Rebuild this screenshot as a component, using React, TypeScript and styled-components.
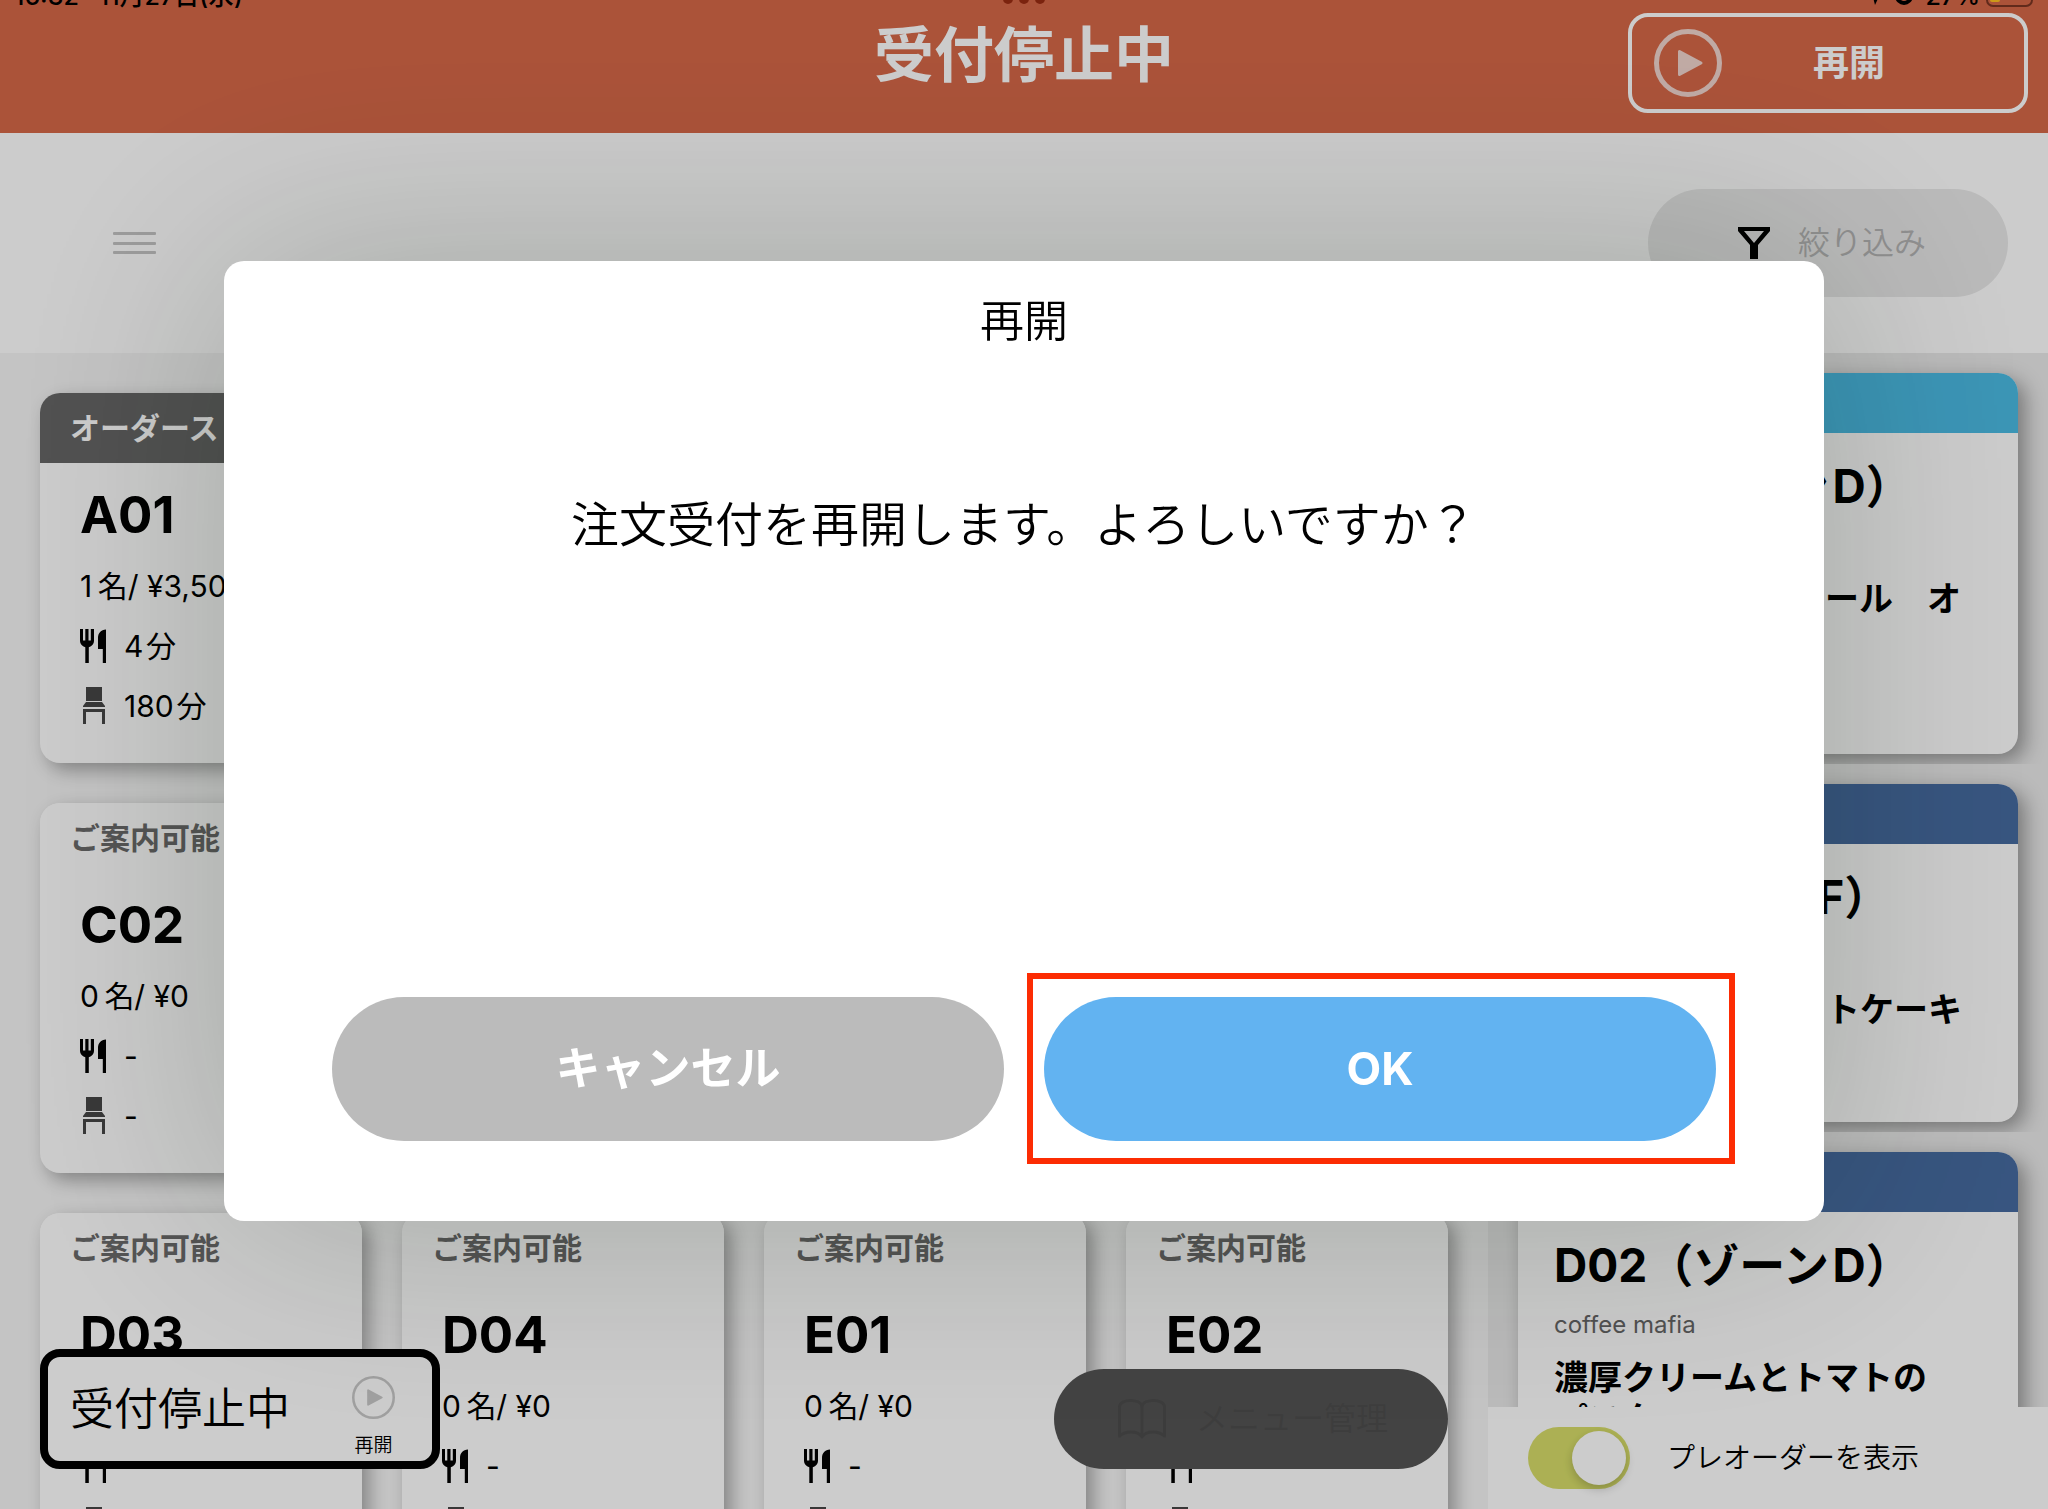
import React from "react";
import styled, { createGlobalStyle } from "styled-components";

const GlobalStyle = createGlobalStyle`
  *, *::before, *::after { box-sizing: border-box; }
  body {
    margin: 0;
    background: #f5f5f5;
    color: #000;
    font-family: Inter, "Noto Sans CJK JP", sans-serif;
  }
  button {
    margin: 0;
    padding: 0;
    border: 0;
    background: none;
    color: inherit;
    font: inherit;
    cursor: pointer;
  }
  h1, h2, h3, p { margin: 0; }
`;

const Screen = styled.div`
  position: relative;
  display: flex;
  flex-direction: column;
  height: 100vh;
  overflow: hidden;
`;

/* ---------- header ---------- */

const Header = styled.header`
  position: relative;
  display: grid;
  grid-template-columns: 400px 1fr 400px;
  align-items: start;
  flex: none;
  height: 133px;
  padding: 13px 20px 20px;
  background: #d66848;
  color: #fff;
`;

const StatusBar = styled.div`
  position: absolute;
  inset: 0 0 auto 0;
  display: flex;
  justify-content: space-between;
  align-items: flex-end;
  height: 8px;
  padding: 0 15px 0 14px;
  overflow: hidden;
  color: #000;
  font-size: 25px;
  line-height: 24px;
  font-weight: 500;
`;

const StatusGroup = styled.div<{ $align: string; $gap: number }>`
  display: flex;
  flex: 1;
  align-items: flex-end;
  justify-content: ${(p) => p.$align};
  gap: ${(p) => p.$gap}px;
  height: 24px;
`;

const Dots = styled.svg`
  display: block;
  margin-bottom: 4px;
`;

const HeaderTitle = styled.h1`
  grid-column: 2;
  text-align: center;
  font-size: 60px;
  line-height: 84px;
  font-weight: 700;
`;

const HeaderButton = styled.button`
  display: flex;
  align-items: center;
  height: 100px;
  padding: 0 22px;
  border: 4px solid #fff;
  border-radius: 20px;
  font-size: 36px;
  line-height: 48px;
  font-weight: 700;
`;

const HeaderButtonLabel = styled.span`
  flex: 1;
  padding-right: 26px;
  text-align: center;
`;

/* ---------- toolbar ---------- */

const Toolbar = styled.div`
  display: flex;
  align-items: center;
  justify-content: space-between;
  flex: none;
  height: 220px;
  padding: 0 40px 0 113px;
  background: #fff;
`;

const MenuButton = styled.button`
  display: flex;
  flex-direction: column;
  justify-content: space-between;
  width: 43px;
  height: 22px;
`;

const MenuLine = styled.span`
  height: 3px;
  border-radius: 1px;
  background: #c4c4c4;
`;

const FilterButton = styled.button`
  display: flex;
  align-items: center;
  justify-content: center;
  gap: 28px;
  width: 360px;
  height: 108px;
  padding-left: 8px;
  border-radius: 54px;
  background: #e9e9e9;
  color: #b4b4b4;
  font-size: 32px;
  line-height: 40px;
  font-weight: 350;
`;

/* ---------- main area ---------- */

const Main = styled.main`
  display: flex;
  flex: 1;
  min-height: 0;
`;

const Tables = styled.section`
  display: flex;
  flex-direction: column;
  gap: 40px;
  flex: 1;
  min-width: 0;
  padding: 40px;
  overflow: hidden;
`;

const TableRow = styled.div`
  display: grid;
  grid-template-columns: repeat(4, 1fr);
  gap: 40px;
`;

const TableCardBox = styled.article`
  flex: none;
  overflow: hidden;
  border-radius: 20px;
  background: #fff;
  box-shadow: 7px 7px 18px rgba(0, 0, 0, 0.32);
`;

const CardStatus = styled.div<{ $stopped?: boolean }>`
  height: 70px;
  padding: 0 30px;
  overflow: hidden;
  white-space: nowrap;
  background: ${(p) => (p.$stopped ? "#666" : "#fff")};
  color: ${(p) => (p.$stopped ? "#fff" : "#6a6a6a")};
  font-size: 30px;
  line-height: 70px;
  font-weight: 700;
`;

const CardBody = styled.div`
  padding: 22px 40px 27px;
`;

const TableName = styled.h2`
  margin-bottom: 11px;
  font-size: 51px;
  line-height: 60px;
  font-weight: 700;
`;

const Info = styled.div`
  display: flex;
  align-items: center;
  gap: 18px;
  height: 60px;
  font-size: 30px;
  line-height: 40px;
  font-weight: 400;
  white-space: nowrap;
`;

/* ---------- order column ---------- */

const Orders = styled.aside`
  display: flex;
  flex-direction: column;
  flex: none;
  width: 560px;
  background: #eaeaea;
`;

const OrderList = styled.div`
  flex: 1;
  min-height: 0;
  overflow: hidden;
`;

const OrderSlot = styled.div`
  padding: 20px 30px 10px;
  overflow: hidden;
`;

const OrderCard = styled.article<{ $height: number }>`
  min-height: ${(p) => p.$height}px;
  overflow: hidden;
  border-radius: 20px;
  background: #fff;
  box-shadow: 7px 7px 20px rgba(0, 0, 0, 0.36);
`;

const OrderStripe = styled.div<{ $color: string }>`
  height: 60px;
  background: ${(p) => p.$color};
`;

const OrderBody = styled.div`
  padding: 23px 36px 0;
`;

const OrderTitle = styled.h3`
  font-size: 46px;
  line-height: 60px;
  font-weight: 700;
  white-space: nowrap;
`;

const OrderShop = styled.p`
  height: 62px;
  color: #666;
  font-size: 24px;
  line-height: 60px;
`;

const OrderItem = styled.p`
  font-size: 34px;
  line-height: 42px;
  font-weight: 700;
  white-space: pre-line;
`;

const PreorderBar = styled.label`
  display: flex;
  align-items: center;
  gap: 37px;
  flex: none;
  height: 102px;
  padding: 0 40px;
  background: #fff;
  font-size: 28px;
  line-height: 40px;
  font-weight: 350;
`;

const Switch = styled.input`
  appearance: none;
  display: flex;
  align-items: center;
  justify-content: flex-start;
  width: 102px;
  height: 62px;
  margin: 0;
  padding: 4px;
  border-radius: 31px;
  background: #ddd;

  &::before {
    content: "";
    width: 54px;
    height: 54px;
    border-radius: 50%;
    background: #fff;
    box-shadow: 0 4px 10px rgba(0, 0, 0, 0.2);
  }

  &:checked {
    justify-content: flex-end;
    background: #d7dd69;
  }
`;

/* ---------- floating controls ---------- */

const FloatingBar = styled.div`
  position: absolute;
  left: 40px;
  right: 600px;
  bottom: 40px;
  display: flex;
  align-items: flex-end;
  justify-content: space-between;
`;

const StopPanel = styled.div`
  display: flex;
  align-items: center;
  justify-content: space-between;
  width: 400px;
  height: 120px;
  padding: 0 37px 0 22px;
  border: 8px solid #000;
  border-radius: 20px;
  background: #fff;
  font-size: 44px;
  line-height: 60px;
  font-weight: 350;
`;

const ResumeButton = styled.button`
  display: flex;
  flex-direction: column;
  align-items: center;
  gap: 15px;
  padding-top: 15px;
  font-size: 19px;
  line-height: 24px;
  font-weight: 350;
`;

const MenuManageButton = styled.button`
  display: flex;
  align-items: center;
  justify-content: center;
  gap: 30px;
  width: 394px;
  height: 100px;
  padding-left: 4px;
  border-radius: 50px;
  background: #545454;
  color: #4d4d4d;
  font-size: 32px;
  line-height: 40px;
  font-weight: 350;
`;

/* ---------- dialog ---------- */

const Backdrop = styled.div`
  position: fixed;
  inset: 0;
  display: flex;
  align-items: center;
  justify-content: center;
  padding: 0 40px 27px;
  background: rgba(0, 0, 0, 0.2);
`;

const Dialog = styled.div`
  display: flex;
  flex-direction: column;
  width: 100%;
  max-width: 1600px;
  min-height: 960px;
  padding: 30px 108px 80px;
  border-radius: 20px;
  background: #fff;
  box-shadow: 0 0 230px rgba(0, 22, 0, 0.21);
  text-align: center;
`;

const DialogTitle = styled.h2`
  font-size: 44px;
  line-height: 60px;
  font-weight: 350;
`;

const DialogMessage = styled.p`
  flex: 1;
  padding-top: 144px;
  font-size: 48px;
  line-height: 60px;
  font-weight: 350;
`;

const DialogActions = styled.div`
  display: grid;
  grid-template-columns: 1fr 1fr;
  gap: 40px;
`;

const ActionSlot = styled.div`
  position: relative;
  display: grid;
`;

const ActionButton = styled.button<{ $color: string }>`
  height: 144px;
  border-radius: 72px;
  background: ${(p) => p.$color};
  color: #fff;
  font-size: 45px;
  line-height: 60px;
  font-weight: 700;
`;

const Highlight = styled.span`
  position: absolute;
  inset: -24px -19px -23px -17px;
  border: 6px solid #fc2c03;
  pointer-events: none;
`;

/* ---------- icons ---------- */

const PlayIcon = ({ size, stroke, color }: { size: number; stroke: number; color: string }) => (
  <svg width={size} height={size} viewBox="0 0 68 68" fill="none" aria-hidden="true">
    <circle cx="34" cy="34" r={34 - stroke / 2} stroke={color} strokeWidth={stroke} />
    <path d="M25.500 22.500V45.500L47 34Z" fill={color} stroke={color} strokeWidth="3" strokeLinejoin="round" />
  </svg>
);

const FilterIcon = () => (
  <svg width="32" height="32" viewBox="0 0 32 32" aria-hidden="true">
    <path
      fillRule="evenodd"
      fill="#000"
      d="M0 0H32V4L20 18V32H12V18L0 4ZM6 4L16 16L26 4Z"
    />
  </svg>
);

const CutleryIcon = () => (
  <svg width="26" height="34" viewBox="0 0 26 34" aria-hidden="true">
    <path d="M0 0H3V11.500H5.300V0H8.500V11.500H10.800V0H14V12C14 15 12 17 8.800 18.200V34H5.300V18.200C2 17 0 15 0 12Z" />
    <path d="M26 0.500V34H22.800V20H18V9C18 4 21 0.800 26 0.500Z" />
  </svg>
);

const ChairIcon = () => (
  <svg width="26" height="38" viewBox="0 0 26 38" fill="#474747" aria-hidden="true">
    <path d="M6 0H22V14H6Z" />
    <path d="M6 15H22L25 19V20H3V19Z" />
    <path d="M3 22H25V37H22V25H6V37H3Z" />
  </svg>
);

const BookIcon = () => (
  <svg width="48" height="40" viewBox="0 0 48 40" fill="none" stroke="#4c4c4c" strokeWidth="3" strokeLinejoin="round" aria-hidden="true">
    <path d="M24 7C23 3.500 18 1.500 12.500 1.500C7 1.500 1.500 3.500 1.500 8V37C5 34 9 33 13 33C18 33 22 34.500 24 38C26 34.500 30 33 35 33C39 33 43 34 46.500 37V8C46.500 3.500 41 1.500 35.500 1.500C30 1.500 25 3.500 24 7Z" />
    <path d="M24 7V38" />
  </svg>
);

/* ---------- data ---------- */

type Table = {
  name: string;
  status: string;
  stopped?: boolean;
  summary: string;
  eating: string;
  seated: string;
};

const vacant = (name: string): Table => ({
  name,
  status: "ご案内可能",
  summary: "0\u2009名/ ¥0",
  eating: "-",
  seated: "-",
});

const rows: Table[][] = [
  [
    {
      name: "A01",
      status: "オーダーストップ",
      stopped: true,
      summary: "1\u2009名/ ¥3,500",
      eating: "4\u200A分",
      seated: "180\u200A分",
    },
  ],
  [vacant("C02")],
  [vacant("D03"), vacant("D04"), vacant("E01"), vacant("E02")],
];

const orders = [
  { title: "D02（ゾーン\u200AD）", color: "#4bbbe4", item: "ノンアルコールビール　オ", height: 381 },
  { title: "F01（ゾーン\u200AF）", color: "#466ba0", item: "ふわふわ厚焼ホットケーキ", height: 338 },
  { title: "D02（ゾーン\u200AD）", color: "#466ba0", item: "濃厚クリームとトマトの\nパスタ", height: 381 },
];

const TableCard = ({ table }: { table: Table }) => (
  <TableCardBox>
    <CardStatus $stopped={table.stopped}>{table.status}</CardStatus>
    <CardBody>
      <TableName>{table.name}</TableName>
      <Info>{table.summary}</Info>
      <Info>
        <CutleryIcon />
        {table.eating}
      </Info>
      <Info>
        <ChairIcon />
        {table.seated}
      </Info>
    </CardBody>
  </TableCardBox>
);

export default function App() {
  return (
    <>
      <GlobalStyle />
      <Screen>
        <Header>
          <StatusBar>
            <StatusGroup $align="flex-start" $gap={20}>
              <span>16:32</span>
              <span>11月27日(水)</span>
            </StatusGroup>
            <Dots width="42" height="9" viewBox="0 0 42 9" fill="#9a2c12" aria-hidden="true">
              <circle cx="5" cy="4" r="5" />
              <circle cx="21" cy="4" r="5" />
              <circle cx="37" cy="4" r="5" />
            </Dots>
            <StatusGroup $align="flex-end" $gap={6}>
              <svg width="24" height="20" viewBox="0 0 24 20" aria-hidden="true">
                <path d="M0 6L18 0L10 17L8 9Z" />
              </svg>
              <svg width="24" height="20" viewBox="0 0 24 20" fill="none" stroke="#000" strokeWidth="4" aria-hidden="true">
                <circle cx="9" cy="8" r="7" />
              </svg>
              <span>27%</span>
              <svg width="47" height="24" viewBox="0 0 47 24" aria-hidden="true">
                <rect x="1" y="1" width="45" height="21" rx="6" fill="none" stroke="#7a3522" strokeWidth="2" />
                <rect x="4" y="4" width="10" height="14" rx="2" fill="#ffc020" />
              </svg>
            </StatusGroup>
          </StatusBar>
          <HeaderTitle>受付停止中</HeaderTitle>
          <HeaderButton type="button">
            <PlayIcon size={68} stroke={5} color="#f0d5ce" />
            <HeaderButtonLabel>再開</HeaderButtonLabel>
          </HeaderButton>
        </Header>

        <Toolbar>
          <MenuButton type="button" aria-label="メニュー">
            <MenuLine />
            <MenuLine />
            <MenuLine />
          </MenuButton>
          <FilterButton type="button">
            <FilterIcon />
            絞り込み
          </FilterButton>
        </Toolbar>

        <Main>
          <Tables>
            {rows.map((row) => (
              <TableRow key={row[0].name}>
                {row.map((table) => (
                  <TableCard key={table.name} table={table} />
                ))}
              </TableRow>
            ))}
          </Tables>

          <Orders>
            <OrderList>
              {orders.map((order) => (
                <OrderSlot key={order.item}>
                  <OrderCard $height={order.height}>
                    <OrderStripe $color={order.color} />
                    <OrderBody>
                      <OrderTitle>{order.title}</OrderTitle>
                      <OrderShop>coffee mafia</OrderShop>
                      <OrderItem>{order.item}</OrderItem>
                    </OrderBody>
                  </OrderCard>
                </OrderSlot>
              ))}
            </OrderList>
            <PreorderBar>
              <Switch type="checkbox" role="switch" defaultChecked />
              プレオーダーを表示
            </PreorderBar>
          </Orders>
        </Main>

        <FloatingBar>
          <StopPanel>
            受付停止中
            <ResumeButton type="button">
              <PlayIcon size={43} stroke={4} color="#c8c8c8" />
              再開
            </ResumeButton>
          </StopPanel>
          <MenuManageButton type="button">
            <BookIcon />
            メニュー管理
          </MenuManageButton>
        </FloatingBar>
      </Screen>

      <Backdrop>
        <Dialog role="dialog" aria-modal="true" aria-labelledby="dialog-title">
          <DialogTitle id="dialog-title">再開</DialogTitle>
          <DialogMessage>注文受付を再開します。よろしいですか？</DialogMessage>
          <DialogActions>
            <ActionSlot>
              <ActionButton type="button" $color="#bbb">
                キャンセル
              </ActionButton>
            </ActionSlot>
            <ActionSlot>
              <ActionButton type="button" $color="#62b3f1">
                OK
              </ActionButton>
              <Highlight />
            </ActionSlot>
          </DialogActions>
        </Dialog>
      </Backdrop>
    </>
  );
}
